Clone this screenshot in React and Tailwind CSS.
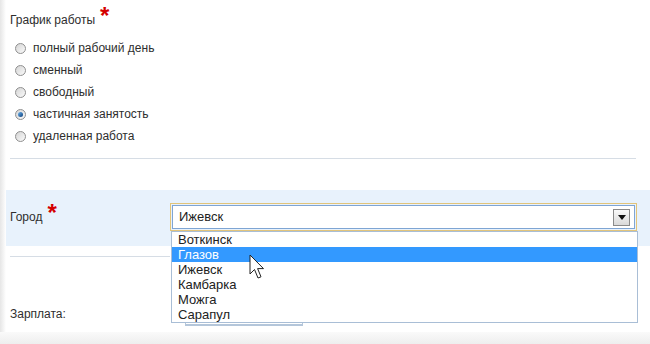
import React from "react";

const options = ["полный рабочий день", "сменный", "свободный", "частичная занятость", "удаленная работа"];
const cities = ["Воткинск", "Глазов", "Ижевск", "Камбарка", "Можга", "Сарапул"];

const Radio = ({ checked }) => (
  <span className="w-[11px] h-[11px] rounded-full border border-[#8f8f8f] bg-gradient-to-br from-[#d4d4d4] to-[#fbfbfb] flex items-center justify-center">
    {checked && <span className="w-[5px] h-[5px] rounded-full bg-gradient-to-br from-[#6fb6f0] to-[#0b3f7a]" />}
  </span>
);

const Star = () => (
  <span className="text-[#d40000] text-[24px] font-bold leading-none ml-[5px] -mt-[8px]">*</span>
);

const Cursor = () => (
  <svg width="16" height="26" viewBox="0 0 16 26" className="absolute left-[77px] top-[22px]">
    <path d="M1 1 L1 20 L5.5 15.5 L9 24 L12 22.8 L8.6 14.6 L14.5 14.6 Z" fill="#fff" stroke="#222" strokeWidth="1" strokeLinejoin="round" />
  </svg>
);

const App = () => {
  return (
    <div className="w-[650px] h-[344px] bg-white flex flex-col text-[12px] text-[#2e2e2e] font-['Liberation_Sans',Arial,sans-serif] overflow-hidden">
      <div className="flex flex-1">
        <div className="w-[6px] bg-gradient-to-r from-[#e6e6e6] to-white" />
        <div className="flex-1 flex flex-col">
          <div className="pl-[4px] pr-[14px] pt-[12px]">
            <div className="flex items-start h-[16px]">
              <span className="leading-[16px]">График работы</span>
              <Star />
            </div>
            <div className="flex flex-col mt-[9px] pl-[5px]">
              {options.map((o, i) => (
                <label key={o} className="flex items-center gap-[7px] h-[22px]">
                  <Radio checked={i === 3} />
                  <span>{o}</span>
                </label>
              ))}
            </div>
            <div className="h-px bg-[#d6dde5] mt-[11px]" />
          </div>
          <div className="mt-[31px] h-[56px] bg-[#e8f2fc] pl-[4px] flex items-start pt-[13px]">
            <div className="w-[160px] flex items-start pt-[6px]">
              <span className="leading-[16px]">Город</span>
              <Star />
            </div>
            <div className="relative w-[467px] h-[28px] border border-[#e2c47a] p-px">
              <div className="h-full border border-[#7fa5d3] bg-white flex items-center pl-[6px] pr-[4px] text-[13px] text-[#222]">
                <span className="flex-1">Ижевск</span>
                <span className="w-[17px] h-[17px] border border-[#8a8a8a] bg-gradient-to-b from-[#fafafa] to-[#d9d9d9] flex items-center justify-center">
                  <svg width="8" height="5" viewBox="0 0 8 5"><path d="M0 0 H8 L4 5 Z" fill="#111" /></svg>
                </span>
              </div>
              <div className="absolute left-0 top-[27px] w-[467px] border border-[#a9bed6] bg-white text-[13px] text-[#222] z-10">
                {cities.map((c) => (
                  <div key={c} className={`h-[15px] leading-[15px] pl-[6px] ${c === "Глазов" ? "bg-[#3399ff] text-white" : ""}`}>
                    {c}
                  </div>
                ))}
                <Cursor />
              </div>
            </div>
          </div>
          <div className="pl-[4px] pr-[14px]">
            <div className="h-px bg-[#d6dde5] mt-[10px] w-[160px]" />
            <div className="flex items-center mt-[44px]">
              <span className="w-[175px]">Зарплата:</span>
              <div className="w-[118px] h-[24px] mt-[1px] border border-[#b4c6da] border-b-[2px] bg-white" />
            </div>
          </div>
        </div>
      </div>
      <div className="h-[12px] bg-gradient-to-b from-[#fafafa] to-[#eeeeee]" />
    </div>
  );
};

export default App;
